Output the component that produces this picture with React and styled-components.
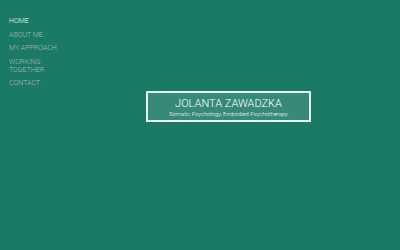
import styled, { createGlobalStyle } from 'styled-components'

const GlobalStyle = createGlobalStyle`
    html, body {
        margin: 0;
        padding: 0;
        background: #1b7a65;
    }
    body {
        font-family: Roboto, 'Liberation Sans', sans-serif;
    }
`

const navItems = [
    { label: 'HOME', active: true },
    { label: 'ABOUT ME' },
    { label: 'MY APPROACH' },
    { label: 'WORKING TOGETHER' },
    { label: 'CONTACT' },
]

function App() {
    return (
        <Page>
            <GlobalStyle />
            <Nav>
                {navItems.map((item) => (
                    <NavItem key={item.label} $active={item.active}>{item.label}</NavItem>
                ))}
            </Nav>
            <Main>
                <TitleBox>
                    <Name>JOLANTA ZAWADZKA</Name>
                    <Tagline>Somatic Psychology, Embodied Psychotherapy</Tagline>
                </TitleBox>
            </Main>
        </Page>
    )
}

const Page = styled.div`
    display: flex;
    width: 400px;
    height: 250px;
    background: #1b7a65;
`

const Nav = styled.nav`
    display: flex;
    flex-direction: column;
    gap: 5.5px;
    flex: 0 0 48px;
    padding: 17px 0 0 9px;
`

const NavItem = styled.a`
    font-size: 7px;
    line-height: 8px;
    font-weight: 300;
    color: ${(p) => (p.$active ? '#f6faf8' : '#a8b9b4')};
    cursor: pointer;
`

const Main = styled.main`
    flex: 1;
    display: flex;
    justify-content: center;
    align-items: flex-start;
    padding-top: 91px;
`

const TitleBox = styled.div`
    display: flex;
    flex-direction: column;
    align-items: center;
    box-sizing: border-box;
    width: 165px;
    height: 31px;
    padding-top: 4px;
    border: 2px solid #e6f4ef;
    background: rgba(255, 255, 255, 0.12);
    color: #ffffff;
`

const Name = styled.h1`
    margin: 0;
    font-size: 11px;
    line-height: 13px;
    font-weight: 300;
`

const Tagline = styled.p`
    margin: 0;
    font-size: 5.8px;
    line-height: 8px;
    font-weight: 300;
`

export default App
